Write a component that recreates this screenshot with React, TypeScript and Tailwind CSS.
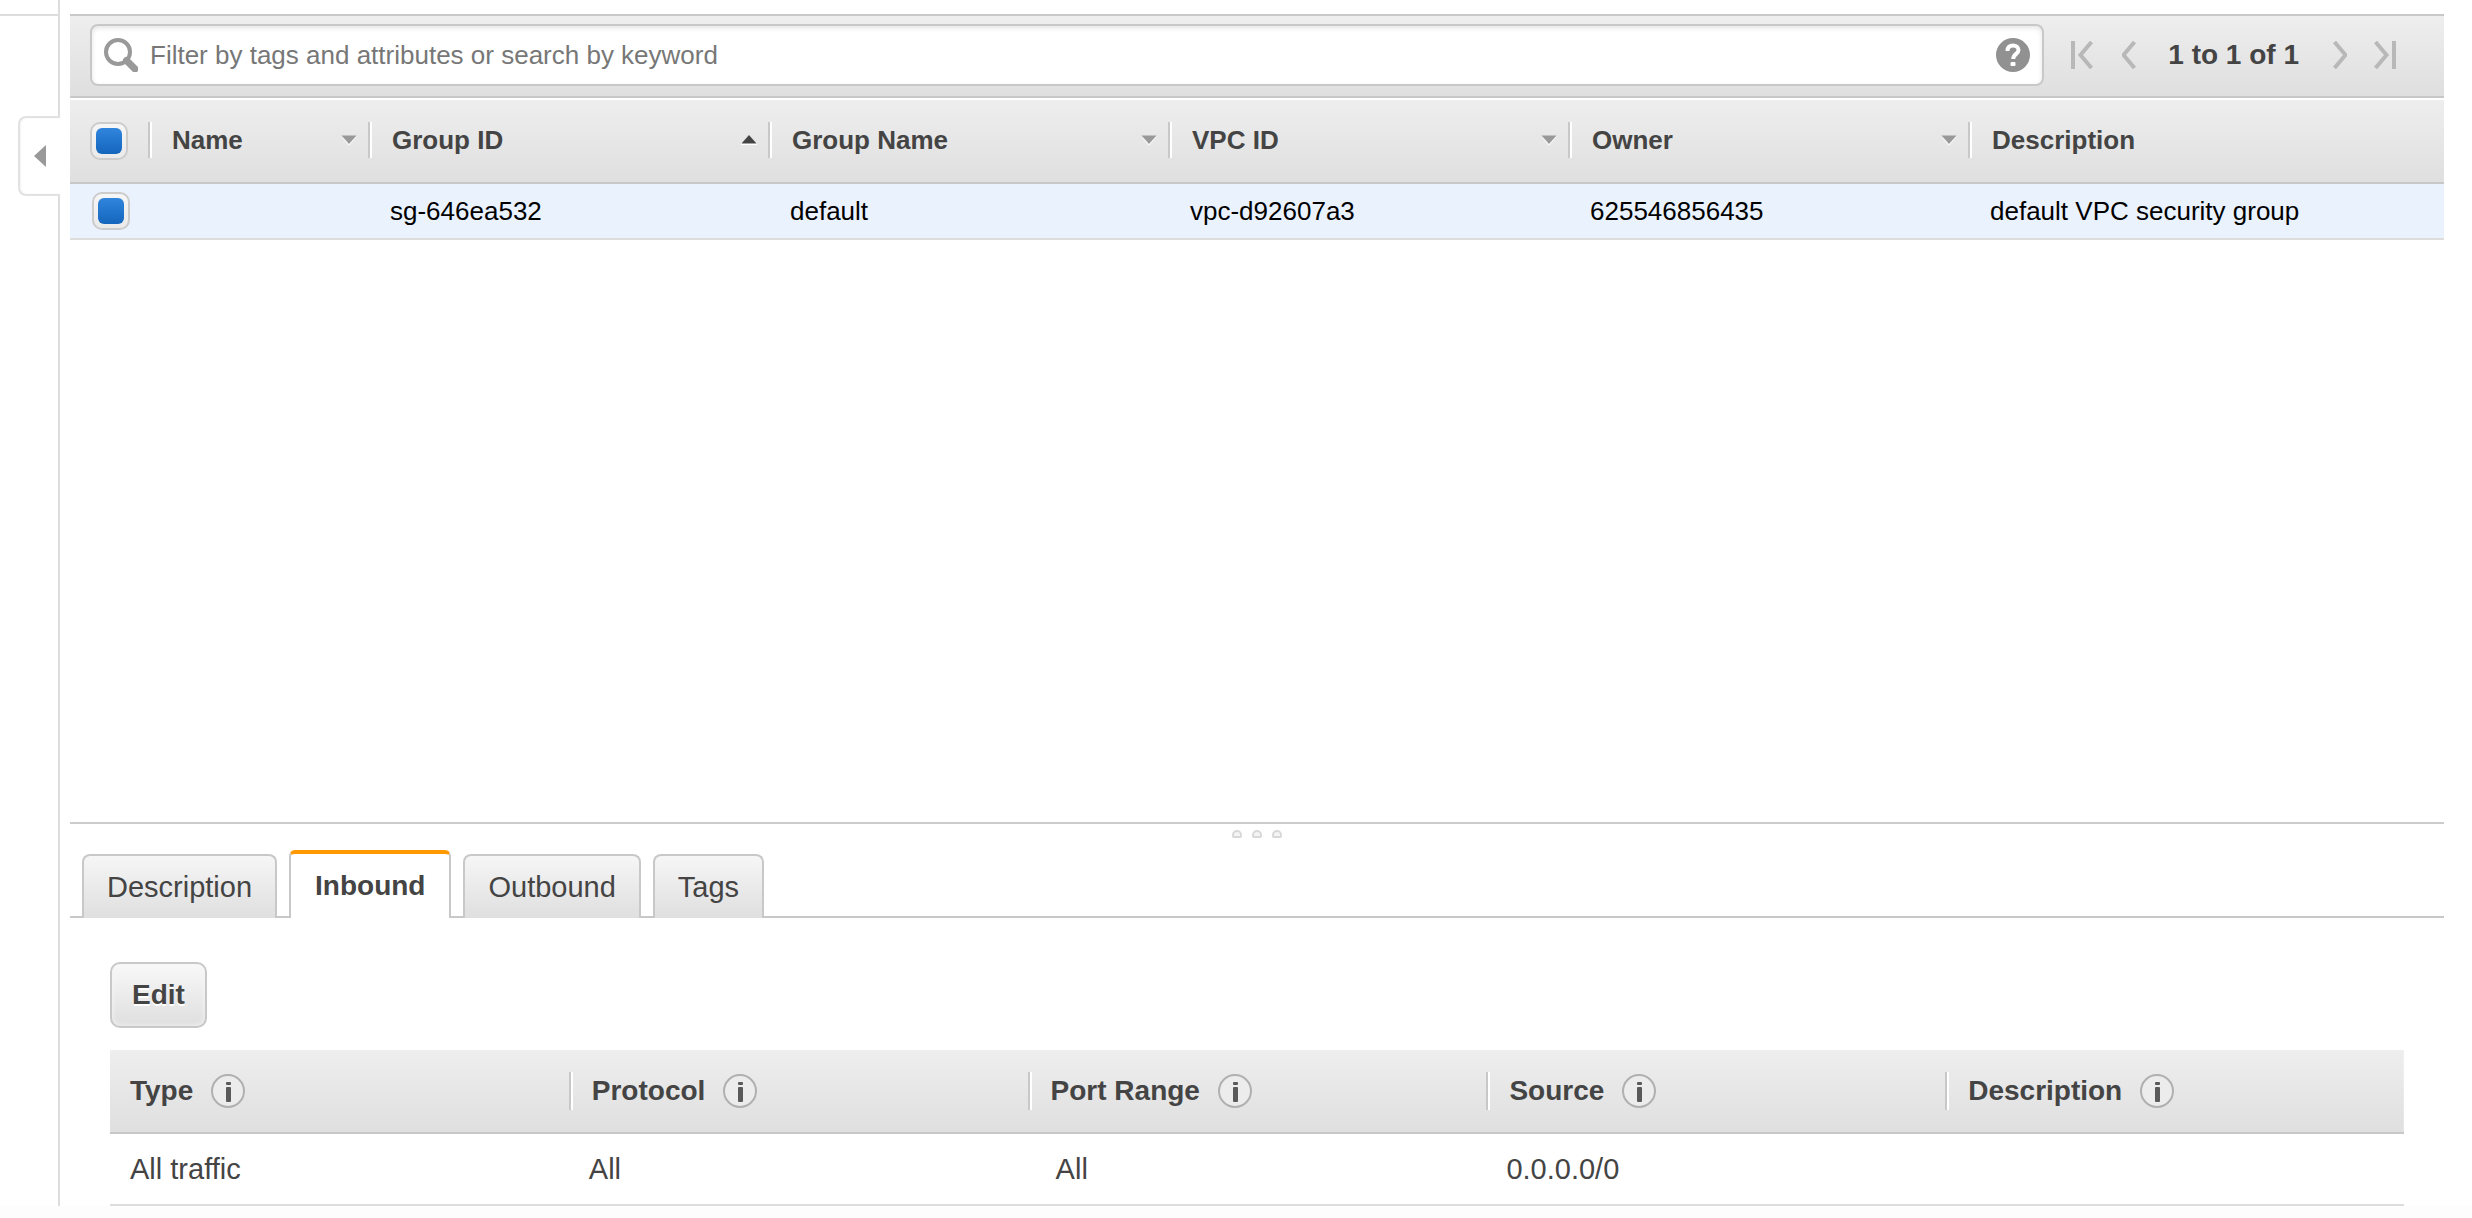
import { useState } from 'react'
import clsx from 'clsx'

interface Column {
  label: string
  width?: string
  sort?: 'asc' | 'none'
}

const groupColumns: Column[] = [
  { label: 'Name', width: 'w-[220px]', sort: 'none' },
  { label: 'Group ID', width: 'w-[400px]', sort: 'asc' },
  { label: 'Group Name', width: 'w-[400px]', sort: 'none' },
  { label: 'VPC ID', width: 'w-[400px]', sort: 'none' },
  { label: 'Owner', width: 'w-[400px]', sort: 'none' },
  { label: 'Description' },
]

const groups = [
  ['', 'sg-646ea532', 'default', 'vpc-d92607a3', '625546856435', 'default VPC security group'],
]

const tabs = ['Description', 'Inbound', 'Outbound', 'Tags']

const ruleColumns = ['Type', 'Protocol', 'Port Range', 'Source', 'Description']

const rules = [['All traffic', 'All', 'All', '0.0.0.0/0', '']]

const SearchIcon: React.FC = () => (
  <svg className="h-[34px] w-[34px] shrink-0" viewBox="0 0 34 34" fill="none">
    <circle cx="14" cy="14" r="12" stroke="#999" strokeWidth="4" />
    <path d="M22.5 22.5L31 31" stroke="#999" strokeWidth="7" strokeLinecap="round" />
  </svg>
)

const HelpIcon: React.FC = () => (
  <svg className="h-[34px] w-[34px]" viewBox="0 0 34 34" fill="none">
    <circle cx="17" cy="17" r="17" fill="#919191" />
    <path
      d="M11.5 13C11.5 9 14 7.5 17 7.5C20.2 7.5 22.5 9.3 22.5 12C22.5 16 17.2 15.8 17.2 21"
      stroke="#fff"
      strokeWidth="4"
    />
    <rect x="14.5" y="24" width="5" height="4" rx="1" fill="#fff" />
  </svg>
)

const InfoIcon: React.FC = () => (
  <svg className="h-[34px] w-[34px]" viewBox="0 0 34 34" fill="none">
    <circle cx="17" cy="17" r="16" fill="#ececec" stroke="#b0b0b0" strokeWidth="2" />
    <rect x="15" y="8" width="5" height="3" rx="1" fill="#5a5a5a" />
    <rect x="15" y="13" width="5" height="15" rx="1" fill="#5a5a5a" />
  </svg>
)

const SortIcon: React.FC<{ dir: 'asc' | 'none' }> = ({ dir }) => (
  <svg className="h-[12px] w-[16px]" viewBox="0 0 16 12">
    {dir === 'asc' ? (
      <>
        <path d="M0 11H16V9H0Z" fill="#fff" />
        <path d="M0.5 9.5L8 1L15.5 9.5Z" fill="#444" />
      </>
    ) : (
      <>
        <path d="M0.5 3L8 12L15.5 3Z" fill="#f8f8f8" />
        <path d="M0.5 1.5L8 10L15.5 1.5Z" fill="#999" />
      </>
    )}
  </svg>
)

const PagerIcon: React.FC<{ bar?: boolean; flip?: boolean }> = ({ bar, flip }) => (
  <svg
    className={clsx('h-[28px]', bar ? 'w-[22px]' : 'w-[14px]', flip && '-scale-x-100')}
    viewBox={bar ? '0 0 22 28' : '8 0 14 28'}
    fill="none"
    stroke="#b8b8b8"
  >
    {bar && <path d="M2 0V28" strokeWidth="4" />}
    <path d="M20.5 1L9.5 14L20.5 27" strokeWidth="4" />
  </svg>
)

const Checkbox: React.FC<{ label: string }> = ({ label }) => (
  <input
    type="checkbox"
    aria-label={label}
    defaultChecked
    className="grid h-[38px] w-[38px] appearance-none place-items-center rounded-[10px] border-2 border-[#ccc] bg-linear-to-b from-[#f6f6f6] to-[#eaeaea] checked:before:h-[26px] checked:before:w-[26px] checked:before:rounded-[6px] checked:before:bg-linear-to-b checked:before:from-[#3085dc] checked:before:to-[#1466bd] checked:before:content-['']"
  />
)

const Rail: React.FC = () => (
  <aside className="flex w-[60px] shrink-0 flex-col">
    <div className="h-4 border-r-2 border-b-2 border-[#ddd]" />
    <div className="h-[100px] border-r-2 border-[#ddd]" />
    <button
      aria-label="Collapse navigation"
      className="ml-[18px] flex h-20 items-center rounded-l-[8px] border-y-2 border-l-2 border-[#e2e2e2] pl-[14px] shadow-[inset_1px_0_2px_#f4f4f4]"
    >
      <svg className="h-[22px] w-[12px]" viewBox="0 0 12 22">
        <path d="M12 0V22L0 11Z" fill="#999" />
      </svg>
    </button>
    <div className="flex-1 border-r-2 border-[#ddd]" />
  </aside>
)

const Toolbar: React.FC = () => (
  <div className="flex h-[84px] items-center border-y-2 border-[#c8c8c8] bg-linear-to-b from-[#eee] to-[#dfdfdf] pr-12 pb-0.5 pl-5">
    <label className="flex h-[62px] flex-1 items-center gap-3 rounded-[8px] border-2 border-[#c8c8c8] bg-white px-3 shadow-[inset_0_2px_5px_#e4e4e4]">
      <SearchIcon />
      <input
        type="text"
        aria-label="Filter security groups"
        placeholder="Filter by tags and attributes or search by keyword"
        className="min-w-0 flex-1 outline-none placeholder:text-[#777]"
      />
      <button aria-label="Help">
        <HelpIcon />
      </button>
    </label>
    <div className="ml-[27px] flex items-center">
      <button aria-label="First page">
        <PagerIcon bar />
      </button>
      <button aria-label="Previous page" className="ml-[29px]">
        <PagerIcon />
      </button>
      <span className="mx-8 text-[28px] leading-[34px] font-bold">1 to 1 of 1</span>
      <button aria-label="Next page" className="ml-0.5">
        <PagerIcon flip />
      </button>
      <button aria-label="Last page" className="ml-[27px]">
        <PagerIcon bar flip />
      </button>
    </div>
  </div>
)

const GroupTable: React.FC = () => (
  <table className="mt-0.5 w-full table-fixed border-separate border-spacing-0 text-left">
    <thead className="bg-linear-to-b from-[#eee] to-[#dfdfdf]">
      <tr className="h-[84px]">
        <th className="w-[78px] border-b-2 border-[#c8c8c8] pl-5">
          <Checkbox label="Select all groups" />
        </th>
        {groupColumns.map((col) => (
          <th key={col.label} className={clsx('border-b-2 border-[#c8c8c8] pb-0.5', col.width)}>
            <button className="flex h-9 w-full items-center justify-between border-l-2 border-[#c8c8c8] pr-[11px] pl-[22px] font-bold shadow-[inset_2px_0_0_#fff]">
              {col.label}
              {col.sort && <SortIcon dir={col.sort} />}
            </button>
          </th>
        ))}
      </tr>
    </thead>
    <tbody>
      {groups.map((cells) => (
        <tr key={cells[1]} className="h-14 bg-[#eaf2fe] text-black">
          <td className="border-b-2 border-[#ddd] pl-[22px]">
            <Checkbox label={`Select ${cells[1]}`} />
          </td>
          {cells.map((cell, i) => (
            <td key={i} className="border-b-2 border-[#ddd] pl-[22px]">
              {cell}
            </td>
          ))}
        </tr>
      ))}
    </tbody>
  </table>
)

const RuleTable: React.FC = () => (
  <table className="mt-[22px] w-full table-fixed border-separate border-spacing-0 text-left">
    <thead className="bg-linear-to-b from-[#eee] to-[#dfdfdf]">
      <tr className="h-[84px]">
        {ruleColumns.map((label, i) => (
          <th key={label} className="border-b-2 border-[#c8c8c8]">
            <div
              className={clsx(
                'flex h-[38px] items-center gap-[18px]',
                i === 0 ? 'pl-5' : 'border-l-2 border-[#c8c8c8] pl-[21px] shadow-[inset_2px_0_0_#fff]'
              )}
            >
              {label}
              <button aria-label={`About ${label}`}>
                <InfoIcon />
              </button>
            </div>
          </th>
        ))}
      </tr>
    </thead>
    <tbody className="text-[29px]">
      {rules.map((cells, row) => (
        <tr key={row} className="h-[72px]">
          {cells.map((cell, i) => (
            <td key={i} className={clsx('border-b-2 border-[#ddd]', i === 2 ? 'pl-7' : 'pl-5')}>
              {cell}
            </td>
          ))}
        </tr>
      ))}
    </tbody>
  </table>
)

const Details: React.FC = () => {
  const [active, setActive] = useState('Inbound')

  return (
    <section className="border-t-2 border-[#ccc] text-[28px]">
      <div className="flex h-[26px] justify-center gap-2.5 pt-1.5">
        {[0, 1, 2].map((dot) => (
          <span
            key={dot}
            className="h-2 w-2.5 rounded-t-[5px] rounded-b-[2px] border-2 border-[#d8d8d8] bg-[#f4f4f4]"
          />
        ))}
      </div>
      <div role="tablist" className="flex items-end">
        <span className="w-3 border-b-2 border-[#c8c8c8]" />
        {tabs.map((tab) => (
          <div key={tab} className="flex items-end">
            <button
              role="tab"
              aria-selected={tab === active}
              onClick={() => setActive(tab)}
              className={clsx(
                'border-x-2 border-x-[#c8c8c8]',
                tab === active
                  ? 'h-[68px] rounded-t-[6px] border-t-4 border-t-[#ff9900] px-6 font-bold'
                  : 'h-16 rounded-t-[8px] border-t-2 border-t-[#c8c8c8] bg-linear-to-b from-[#f6f6f6] to-[#dfdfdf] px-[23px] text-[29px]'
              )}
            >
              {tab}
            </button>
            <span className="w-3 border-b-2 border-[#c8c8c8]" />
          </div>
        ))}
        <span className="flex-1 border-b-2 border-[#c8c8c8]" />
      </div>
      <div className="px-10 pt-11">
        <button className="block h-[66px] rounded-[10px] border-2 border-[#c8c8c8] bg-linear-to-b from-[#f8f8f8] to-[#dfdfdf] px-5 font-bold shadow-[inset_0_0_5px_#f6f6f6] text-shadow-[0_2px_0_#fff]">
          Edit
        </button>
        <RuleTable />
      </div>
    </section>
  )
}

const App: React.FC = () => {
  return (
    <div className="flex h-screen flex-col bg-white font-['Liberation_Sans',Arial,sans-serif] text-[26px] leading-[30px] text-[#444]">
      <div className="flex flex-1">
        <Rail />
        <main className="mt-3.5 mr-7 ml-2.5 flex min-w-0 flex-1 flex-col">
          <Toolbar />
          <div className="flex-1">
            <GroupTable />
          </div>
          <Details />
        </main>
      </div>
      <div className="h-3 bg-[#fdfdfd]" />
    </div>
  )
}

export default App
